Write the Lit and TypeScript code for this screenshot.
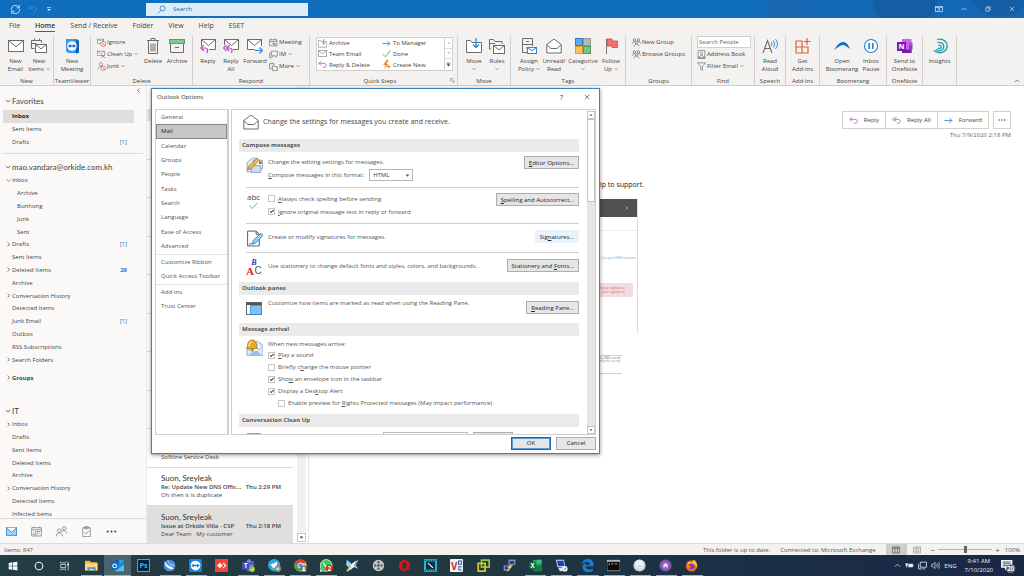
import { LitElement, html, svg, css, nothing, TemplateResult } from "lit";
import { customElement, property } from "lit/decorators.js";
import { classMap } from "lit/directives/class-map.js";
import { styleMap } from "lit/directives/style-map.js";

/* ---------- icons, all drawn on a 16 x 16 grid ---------- */
const G = "#6e6c6a";
const P = "#b14fc5";
const B = "#2b88d8";
const env = (x: number, y: number, w: number, h: number, c = G, f = "#fff") =>
  svg`<rect x=${x} y=${y} width=${w} height=${h} fill=${f} stroke=${c} stroke-width="1"/><path d=${`M${x} ${y}l${w / 2} ${h * 0.55}l${w / 2} ${-h * 0.55}`} fill="none" stroke=${c} stroke-width="1"/>`;

const icons: Record<string, TemplateResult | unknown> = {
  sync: svg`<path d="M2 9V6.500a6 6 0 0 1 11-1.500M14 7v2.500a6 6 0 0 1-11 1.500M13.500 1.500v4h-4M2.500 14.500v-4h4" fill="none" stroke="#d5e8f8" stroke-width="1.300"/>`,
  undo: svg`<path d="M3 2v5h5M3 7c3-4 10-4 10 1 0 3-3 5-5 7" fill="none" stroke="#4c93d2" stroke-width="1.300"/>`,
  qat: svg`<path d="M4 5h8" stroke="#d5e8f8" stroke-width="1.400"/><path d="M4 8h8l-4 4z" fill="#d5e8f8"/>`,
  search: svg`<circle cx="10" cy="6" r="4.500" fill="none" stroke="#1b6fb8" stroke-width="1.300"/><path d="M7 9.500L1.500 15" stroke="#1b6fb8" stroke-width="1.300"/>`,
  ribbonOpt: svg`<rect x="1" y="3" width="14" height="10" fill="none" stroke="#e3effa" stroke-width="1.300"/><path d="M1 5h14M8 12V7M5.500 9L8 6.700 10.500 9" fill="none" stroke="#e3effa" stroke-width="1.300"/>`,
  min: svg`<path d="M1 8h14" stroke="#e3effa" stroke-width="1.500"/>`,
  restore: svg`<path d="M2 5h9v9H2zM5 5V2h9v9h-3" fill="none" stroke="#e3effa" stroke-width="1.600"/>`,
  close: svg`<path d="M2 2l12 12M14 2L2 14" stroke="currentColor" stroke-width="1.600"/>`,
  mail: svg`${env(0.5, 2.5, 15, 11)}`,
  newItems: svg`<path d="M.500 2.500h10v2M.500 2.500v8h3M.500 5.500h5M3.500 .500v2M8.500 .500v2" fill="none" stroke=${G}/>${env(4.5, 6.5, 11, 8)}`,
  teamviewer: svg`<path d="M2 1h9c3 0 4 1 4 4v10H6c-3 0-4-1-4-4z" fill="#2f9cf0"/><path d="M12 1l3 2v11l-3 2z" fill="#0f62b8"/><circle cx="8" cy="8" r="4.800" fill="#fff"/><path d="M3.800 8l2.600-2v1.300h3.200V6l2.600 2-2.600 2V8.700H6.400V10z" fill="#1277d4"/>`,
  ignore: svg`<rect x="1" y="2" width="11" height="8" fill="#fff" stroke=${G}/><path d="M1 4h11" stroke=${G}/><circle cx="11" cy="10.500" r="4.500" fill="#fff" stroke="#e5544c" stroke-width="1.400"/><path d="M8 7.500l6 6" stroke="#e5544c" stroke-width="1.400"/>`,
  cleanup: svg`<rect x="1" y="2" width="12" height="8" fill="#fff" stroke=${G}/><path d="M1 2l6 5 6-5" fill="none" stroke=${G}/><path d="M8 8l6 6M14 8l-6 6" stroke="#e5544c" stroke-width="1.600"/>`,
  junk: svg`<circle cx="7" cy="4" r="3" fill="none" stroke=${G}/><path d="M2 14c0-4 2-6 5-6" fill="none" stroke=${G}/><circle cx="11" cy="11" r="4" fill="#fff" stroke="#e5544c" stroke-width="1.400"/><path d="M8.200 8.200l5.600 5.600" stroke="#e5544c" stroke-width="1.400"/>`,
  trash: svg`<path d="M3.500 3v12.500h9V3M2 2.500h12M6 2.500V.500h4v2M6 5.500v8M8 5.500v8M10 5.500v8" fill="none" stroke=${G}/>`,
  archive: svg`<rect x=".5" y="1.500" width="15" height="4" fill="#7ecb95" stroke="#4ea568"/><path d="M1.500 6v8.500h13V6M6 9.500h4" fill="none" stroke=${G}/>`,
  reply: svg`<path d="M1.500 8V1.500h14v10H9" fill="#fff" stroke=${G}/><path d="M1.500 1.500l7 6 7-6" fill="none" stroke=${G}/><path d="M4 7L.800 10 4 13M1 10h4.500c2 0 2.500 2 1.500 5" fill="none" stroke=${P} stroke-width="1.200"/>`,
  replyAll: svg`<path d="M1.500 7V1.500h14v10H10" fill="#fff" stroke=${G}/><path d="M1.500 1.500l7 6 7-6" fill="none" stroke=${G}/><path d="M3.500 7L.500 10l3 3M6.500 7l-3 3 3 3M4 10h3c2 0 2.500 2 1.500 5" fill="none" stroke=${P} stroke-width="1.200"/>`,
  forward: svg`<path d="M8 11.500H.500v-10h14V8" fill="#fff" stroke=${G}/><path d="M.500 1.500l7 6 7-6" fill="none" stroke=${G}/><path d="M8 12.500h7.500M12.500 9.500l3 3-3 3" fill="none" stroke=${B} stroke-width="1.200"/>`,
  meeting: svg`<path d="M1 3h13v11H1zM1 6h13M4 1v2M11 1v2" fill="none" stroke=${G} stroke-width="1.200"/><path d="M9 8l-2.500 2L9 12M7 10h4v4" fill="none" stroke=${P} stroke-width="1.500"/>`,
  im: svg`<path d="M4 2h11v8h-2v3l-3-3H4zM4 6H1v6h1v3l2.500-3H8" fill="none" stroke=${G} stroke-width="1.200"/>`,
  more: svg`<path d="M1 3h8v3M1 3v9h4M3 1v2M7 1v2M6 7h4l1 1.500h4V15H6z" fill="none" stroke=${G} stroke-width="1.200"/>`,
  folderDown: svg`<path d="M.500 2.500h4L6 4.500h9.500V14.500H.500z" fill="#fff" stroke=${G}/><path d="M10 0v9M7 6.500l3 3 3-3" fill="none" stroke=${B} stroke-width="1.300"/>`,
  right: svg`<path d="M1 8h13M9.500 3.500L14 8l-4.500 4.500" fill="none" stroke=${B} stroke-width="1.500"/>`,
  done: svg`<path d="M1.500 9l4.500 5L15 2.500" fill="none" stroke="#4aae6b" stroke-width="1.600"/>`,
  flash: svg`<path d="M8 0L2 9h4l-2 7 8-9H8l4-7z" fill="#f0912d"/><path d="M12 9v6M9 12h6" stroke="#c96b10" stroke-width="1.300"/>`,
  back: svg`<path d="M5.500 2L1.500 6l4 4M2 6h9c5 0 5 7 0 7H9" fill="none" stroke=${P} stroke-width="1.400"/>`,
  backAll: svg`<path d="M4.500 2L.800 6l3.700 4M8 2L4.300 6 8 10M5 6h6c5 0 5 7 0 7H9" fill="none" stroke=${P} stroke-width="1.400"/>`,
  rules: svg`<path d="M.500 11V1.500h4L6 3.500h7V6M2 11H.500M.500 5.500H6" fill="none" stroke=${G}/>${env(4.5, 7.5, 11, 8)}`,
  policy: svg`<path d="M6 14.500H1.500v-14h10V8M1.500 6.500h10M5 3.500h3M5 10h2" fill="none" stroke=${G}/>${env(6.5, 9.5, 9, 6, B)}`,
  openMail: svg`<path d="M.800 6.500L8 1l7.200 5.500v8.500H.800z" fill="#fff" stroke=${G}/><path d="M.800 6.500l4.200 4h6l4.200-4" fill="none" stroke=${G}/>`,
  categorize: svg`<rect x=".5" y=".5" width="7" height="7" fill="#63a8e4" stroke="#2b7cc4"/><rect x="8.500" y=".5" width="7" height="7" fill="#b9b7b5" stroke="#979593"/><rect x=".5" y="8.500" width="7" height="7" fill="#fbc45e" stroke="#e79a1f"/><rect x="8.500" y="8.500" width="7" height="7" fill="#74c68c" stroke="#45a162"/>`,
  flag: svg`<path d="M3.500 1v15" stroke="#777" /><path d="M4 1h5v2h5.500v6.500H9V8H4z" fill="#f4716f" stroke="#d9423f" stroke-width=".8"/>`,
  people: svg`<circle cx="4.500" cy="3.500" r="2.300" fill="none" stroke=${G} stroke-width="1.300"/><circle cx="11.500" cy="3.500" r="2.300" fill="none" stroke=${G} stroke-width="1.300"/><circle cx="8" cy="8.500" r="2.300" fill="none" stroke=${G} stroke-width="1.300"/><path d="M1 10c0-3 2-4 4-3.500M15 10c0-3-2-4-4-3.500M4 15c0-6 8-6 8 0" fill="none" stroke=${G} stroke-width="1.300"/>`,
  book: svg`<path d="M2 1h12v14H2z" fill="#fff" stroke=${G} stroke-width="1.300"/><circle cx="8" cy="6" r="2.200" fill="none" stroke=${G} stroke-width="1.300"/><path d="M4.500 13c0-5 7-5 7 0M1 13h14" fill="none" stroke=${G} stroke-width="1.300"/>`,
  funnel: svg`<path d="M1 1.500h14L9.500 8v7l-3-2V8z" fill="none" stroke=${G} stroke-width="1.200"/>`,
  aloud: svg`<path d="M1 15L5.500 2.500 10 15M2.500 10.500h6" fill="none" stroke=${G} stroke-width="1.100"/><path d="M9.500 4a4 4 0 0 1 0 4M11.500 2.500a6 6 0 0 1 0 7M13.500 1a8 8 0 0 1 0 10" fill="none" stroke="#3a93cf" stroke-width="1"/>`,
  addins: svg`<path d="M1 3h6v12H1zM1 9h12v6H1M7 3v6M13 9v6M12 0v7M8.500 3.500h7" fill="none" stroke="#e0603a" stroke-width="1.200"/>`,
  boomerang: svg`<path d="M0 12C3 7 6 4 9 4s5 2 7 7c-3-2-5-4-7-4S4 9 0 12z" fill="#0c72c9"/>`,
  pause: svg`<circle cx="8" cy="8" r="6.500" fill="#fff" stroke="#1f86d6" stroke-width="1.100"/><path d="M6.200 5v6M9.800 5v6" stroke="#1f86d6" stroke-width="1.700"/>`,
  onenote: svg`<path d="M5 1h9.500v14H5z" fill="#ca64ea"/><path d="M12 4.500h3.500V8H12z" fill="#ae4bd5"/><path d="M12 8h3.500v3.500H12z" fill="#9332bf"/><path d="M5 11.500h9.500V15H5z" fill="#7719aa"/><rect x="0" y="4" width="9" height="9" fill="#7719aa"/><text x="4.500" y="11.200" class="mark" font-size="7.500">N</text>`,
  insights: svg`<path d="M5 1.500C12-.5 16 5 15 9.500S7 17 2 12.500M5.500 4.500C10 3.500 12.500 7 11.500 10S7 13.500 4 11.500M6.500 7.300c2-.3 3 1 2.500 2.200S7 11 6 10" fill="none" stroke="#1f9aa8" stroke-width="1.300"/>`,
  calendar: svg`<path d="M1 2.500h14v12H1zM1 5.500h14M4 1v1.500M12 1v1.500" fill="none" stroke=${G}/><path d="M6 8h7M3.500 10.300h9M3.500 12.500h6" stroke=${G} stroke-dasharray="1.500 1.200" stroke-width="1.400"/>`,
  mailOn: svg`<rect x=".5" y="2.500" width="15" height="11" fill="#9fd0f5" stroke="#1272c4"/><path d="M.500 2.500L8 9l7.500-6.500" fill="#fff" stroke="#1272c4"/>`,
  contacts: svg`<circle cx="5" cy="7" r="2.700" fill="none" stroke=${G}/><circle cx="12" cy="3.500" r="2.500" fill="none" stroke=${G}/><path d="M.500 15c0-7 9-7 9 0M9 8c2-2 6-1.500 6.500 3" fill="none" stroke=${G}/>`,
  tasks: svg`<path d="M2.500 2.500h11v13h-11zM5.500 1h5v3h-5z" fill="none" stroke=${G}/><path d="M5 9l2.500 2.500L11.500 7" fill="none" stroke=${G}/>`,
  dots: svg`<circle cx="2.500" cy="8" r="1.500" fill="#444"/><circle cx="8" cy="8" r="1.500" fill="#444"/><circle cx="13.500" cy="8" r="1.500" fill="#444"/>`,
  compose: svg`<path d="M1 6l5-4h4v9l-4 4H1z" fill="#dfe8f2" stroke="#8795a8" stroke-width=".7"/><path d="M7 4h8.500v8H7z" fill="#f6f9fc" stroke="#7c8da5" stroke-width=".7"/><path d="M5 9h9v6.500H5z" fill="#cddced" stroke="#7c8da5" stroke-width=".7"/><path d="M12.300 5h2.500v2.500h-2.500z" fill="#de4a34"/><path d="M1.500 13l1-3L10.500 2 12.500 4 4.500 12z" fill="#f3bd4e" stroke="#8a6420" stroke-width=".7"/>`,
  signature: svg`<path d="M1.500 1h8l3 3v11h-11z" fill="#fff" stroke="#555" stroke-width=".9"/><path d="M9.500 1v3h3" fill="none" stroke="#555" stroke-width=".9"/><path d="M6 13l1-3.500L14 3l2 2-6.500 7z" fill="#9bd0f2" stroke="#2b88d8" stroke-width=".9"/><path d="M3 14c2-3 3 0 4-1" fill="none" stroke="#2b88d8"/>`,
  panes: svg`<rect x=".5" y="1.500" width="15" height="12" fill="#fff" stroke="#555" stroke-width=".9"/><path d="M1 3h14" stroke="#555" stroke-width="2"/><path d="M4.500 4.500h11v9h-11z" fill="#83bff0" stroke="#2b88d8" stroke-width=".8"/>`,
  bell: svg`<path d="M5 6l5.500-4L16 6v10H1V9z" fill="#dce9f6" stroke="#7f9bbb" stroke-width=".7"/><path d="M1 9l8 4 7-7" fill="#fff" stroke="#7f9bbb" stroke-width=".7"/><path d="M1 16l7-5h2l6 5z" fill="#9cc0e4"/><path d="M.500 9C2 7.500 1 5.500 2 3.500 3 .500 7.500 0 9 2.500 10.500 5 9.500 7 11 9z" fill="#e8ab2c" stroke="#9a6a10" stroke-width=".7"/><path d="M3 7c0-2 .500-4 2.500-4.500" stroke="#fbe39b" stroke-width="1.300" fill="none"/><circle cx="6" cy="10" r="1.300" fill="#b8801a"/>`,
  abcCheck: svg`<path d="M1 8l5 5.500L15 3" fill="none" stroke="#4aae6b" stroke-width="1.500"/>`,
  win: svg`<path d="M1 3l6-1v5.500H1zM8 1.900L15 1v6.500H8zM1 8.500h6V14l-6-1zM8 8.500h7V15l-7-1z" fill="#f4f7f8"/>`,
  cortana: svg`<circle cx="8" cy="8" r="6" fill="none" stroke="#eef3f4" stroke-width="1.800"/>`,
  taskview: svg`<path d="M1 1v2h8V1M1 15v-2h8v2M1 5.500h8v5H1zM13 1v14" fill="none" stroke="#dfe6e8" stroke-width="1.200"/><path d="M11.500 4h3v3h-3z" fill="#dfe6e8"/>`,
  explorer: svg`<path d="M0 2h6l1.500 2H15v10H0z" fill="#f0b73d"/><path d="M0 5.500h15.500V14H0z" fill="#fcd876"/><path d="M3 10h10v4.500h-2.500V12h-5v2.500H3z" fill="#3c93dd"/>`,
  outlook: svg`<path d="M5 1h10v8H5z" fill="#28a8ea"/><path d="M5 1h5v4H5z" fill="#0f5fae"/><path d="M10 5h6v9H5V8z" fill="#1489dc"/><path d="M5 14l11-7v8H6z" fill="#50c0f5"/><rect x="0" y="4" width="9" height="9" rx="1" fill="#0a64b8"/><circle cx="4.500" cy="8.500" r="2.300" fill="none" stroke="#fff" stroke-width="1.300"/>`,
  ps: svg`<rect x=".7" y=".7" width="14.600" height="14.600" fill="#051c2c" stroke="#26b7f2" stroke-width="1.300"/><text x="8" y="11.500" class="mark cyan" font-size="9">Ps</text>`,
  bird: svg`<circle cx="8" cy="8" r="7.200" fill="#4a8fe0"/><path d="M2 2.500c0 6 4 11 12 10-1.500-1-2.500-1.500-3-3C7 9.500 4 6.500 2 2.500z" fill="#f2f8fe"/><path d="M6 2c1 4 3 5 8 6" fill="none" stroke="#b9d8f7" stroke-width="1.200"/>`,
  tv: svg`<rect width="16" height="16" rx="2" fill="#1183e3"/><circle cx="8" cy="8" r="6" fill="#fff"/><path d="M2.600 8l3.400-2.600v1.700h4V5.400L13.400 8 10 10.600V8.900H6v1.700z" fill="#1183e3"/>`,
  anydesk: svg`<rect width="16" height="16" fill="#f0443a"/><path d="M6 4.500L9.500 8 6 11.500 2.500 8zM9 4.500L10.500 4.500 14 8l-3.500 3.500H9L12 8z" fill="#fff"/>`,
  teams: svg`<circle cx="13" cy="4" r="2" fill="#5b62c9"/><circle cx="8.500" cy="3" r="2.700" fill="#7b83eb"/><path d="M5 6h9.500v5c0 3-3 4-5 4s-4.500-1-4.500-4z" fill="#6b74dc"/><rect x="0" y="4" width="9" height="9" rx="1" fill="#454db3"/><text x="4.500" y="11.200" class="mark" font-size="7.500">T</text><circle cx="12.500" cy="12.500" r="3.500" fill="#8fc43a"/><path d="M11 12.500l1.200 1.200 2-2.200" fill="none" stroke="#fff"/>`,
  telegram: svg`<circle cx="7.500" cy="7.500" r="7.500" fill="#32a5dc"/><path d="M2.500 7.500l9-4-1.500 9-3-2-1.500 1.500V9z" fill="#fff"/><circle cx="12" cy="12" r="4" fill="#8a9093"/><path d="M11 10.500v3M13 10.500v3" stroke="#fff"/>`,
  chrome: svg`<circle cx="8" cy="8" r="7.500" fill="#f3c52f"/><path d="M1.500 4.200A7.500 7.500 0 0 1 14.800 5H8a3 3 0 0 0-2.800 4z" fill="#e2402f"/><path d="M1.500 4.200A7.500 7.500 0 0 0 7.500 15.500L10 10.500A3 3 0 0 1 5.300 9.500z" fill="#35a653"/><circle cx="8" cy="8" r="3" fill="#4a8df0" stroke="#fff"/><circle cx="12" cy="12" r="4" fill="#6e6e6e"/><circle cx="12" cy="11" r="1.500" fill="#eee"/><path d="M9.500 15c0-3.500 5-3.500 5 0z" fill="#eee"/>`,
  whatsapp: svg`<path d="M0 15.500l1.200-4A7.300 7.300 0 1 1 4.300 14.500z" fill="#3cc85a" stroke="#eafaee"/><path d="M4.500 4.500c1 4 3 6 6.500 6.500" stroke="#fff" stroke-width="1.700" fill="none"/><circle cx="11.500" cy="11.500" r="4.500" fill="#e2231a"/><text x="11.500" y="14.500" class="mark" font-size="8">2</text>`,
  butterfly: svg`<path d="M1 1l6 5 8-5-3 7 3 4-5-2-4 3-5 3 2-6-3-3z" fill="#8fd0f2"/><path d="M7 6l5-4-1 5-3 4-5 3 3-6z" fill="#f4f9fc"/><path d="M3 2l3 3M13 4l-3 4" stroke="#2c83c4"/><path d="M1 15l5-6" stroke="#d9b45a" stroke-width="1.800"/>`,
  reel: svg`<circle cx="8" cy="8" r="7" fill="#c2c7c9"/><circle cx="8" cy="8" r="1.500" fill="#4c5558"/><g fill="#5d676a"><circle cx="8" cy="4" r="1.500"/><circle cx="8" cy="12" r="1.500"/><circle cx="4" cy="8" r="1.500"/><circle cx="12" cy="8" r="1.500"/></g>`,
  red: svg`<path d="M8 .5l6.500 3.500v8L8 15.500 1.500 12V4z" fill="#d8141c"/><ellipse cx="8" cy="8" rx="2.600" ry="4" fill="#243a45"/>`,
  film: svg`<rect width="16" height="16" fill="#25b6cc"/><rect x="2.500" y="3" width="11" height="10" fill="#0e2d3f"/><path d="M1 1.500h14M1 14.500h14" stroke="#0e2d3f" stroke-width="1.400" stroke-dasharray="1.500 1.500"/><path d="M5 5l6 6" stroke="#e8f6f8" stroke-width="1.500"/>`,
  vnc: svg`<rect width="16" height="16" rx="1" fill="#f2f2f2"/><text x="5" y="13" class="mark crimson" font-size="12">V</text><path d="M10.500 2.500h3.500v4h-3.500zM14.500 9.500h-3.500v4h3.500" fill="none" stroke="#2c57b5" stroke-width="1.300"/>`,
  vm: svg`<path d="M5.500 1.500H15V10H5.500z" fill="none" stroke="#8cc63f" stroke-width="2.200"/><path d="M1.500 5.500H10V15H1.500z" fill="none" stroke="#e0c12c" stroke-width="2.200"/>`,
  putty: svg`<path d="M7 1h8v6H7zM1 8h7v6H1z" fill="#b8c4d0" stroke="#5a6670" stroke-width=".6"/><path d="M8 2h6v4H8zM2 9h5v4H2z" fill="#2739b8"/><path d="M12 7l-6 3 4 0-5 5" fill="none" stroke="#f7e23c" stroke-width="1.300"/>`,
  excel: svg`<path d="M5 1h10.500v14H5z" fill="#21a366"/><path d="M10 1h5.500v4.500H10z" fill="#33c481"/><path d="M5 8h10.500v7H5z" fill="#107c41"/><rect x="0" y="4" width="8.500" height="8.500" fill="#0f6b38"/><text x="4.200" y="11" class="mark" font-size="7.500">X</text>`,
  rdp: svg`<path d="M1 1h10l2 9H3z" fill="#c9d6e3"/><path d="M2.500 2h7.800l1.500 6.500H3.800z" fill="#1743c8"/><path d="M4 11l9-1 2 4-9 1z" fill="#dfe5ea"/><circle cx="12" cy="12" r="3.500" fill="#e9eef0"/><path d="M10.500 12l1.200 1.200 2-2.400" fill="none" stroke="#3a8a3a"/>`,
  edge: svg`<path d="M.500 7.500C1.500 2 5 0 8.500 0c5 0 7 3.500 7 7v2H5.500c.2 4.500 6 4.500 9 2.600V15c-6 2.500-12.500.5-12.500-5C2 7 4 5 6 4.500c-.7.800-1 1.700-1 2.500h6c0-5-7-4.500-10.500.500z" fill="#0f7fdc"/>`,
  cmd: svg`<rect width="16" height="13" y="1.500" fill="#0a0a0a" stroke="#b9b9b9" stroke-width=".8"/><path d="M0 2.500h16" stroke="#d8d8d8" stroke-width="1.600"/><path d="M2 5.500l1.500 1L2 7.500M5 6h3M9.500 6h3" fill="none" stroke="#ddd" stroke-width=".9"/>`,
  ball: svg`<circle cx="8" cy="8" r="7.500" fill="#d2d2d2"/><circle cx="8" cy="6.500" r="5.500" fill="#efefef"/><path d="M6 9h4" stroke="#aaa"/>`,
  purple: svg`<circle cx="8" cy="8" r="7.500" fill="#8450ad"/><circle cx="8" cy="8" r="4.500" fill="#9a6bbd"/><path d="M5.500 10.500V7.500L8 5l2.500 2.500v3H9V8.800H7v1.700z" fill="#f3eaf8"/>`,
  firefox: svg`<circle cx="8" cy="8.500" r="7" fill="#f5662a"/><path d="M3 3c1 1 3 0 5 1.500L11 .500c3 3 5 6 3.500 10-1-3-3-4-5-4S4 8 3 3z" fill="#fcc32c"/><circle cx="8" cy="9" r="3.400" fill="#6b3bc6"/><path d="M1 8c3-1 4 1 7 .5-1 3-5 2.500-7-.5z" fill="#f9862b"/>`,
  up: svg`<path d="M2 11l6-6 6 6" fill="none" stroke="#e8edf3" stroke-width="1.600"/>`,
  battery: svg`<path d="M1 4h4v4H4v3H2V8H1zM6 5h8v6H6z" fill="#e8edf3"/><path d="M14 7h1.500v2H14z" fill="#e8edf3"/>`,
  network: svg`<path d="M4 2h11v9H4zM1 5v9h6M8 14h5" fill="none" stroke="#e8edf3" stroke-width="1.400"/>`,
  sound: svg`<path d="M1 6h2.500L7 2.500v11L3.500 10H1z" fill="none" stroke="#e8edf3" stroke-width="1.200"/><path d="M9.500 5.500a4 4 0 0 1 0 5M11.500 3.500a6.500 6.500 0 0 1 0 9M13.500 2a9 9 0 0 1 0 12" fill="none" stroke="#e8edf3"/>`,
  notes: svg`<path d="M0 1h13v9H7l-2.500 3v-3H0z" fill="#eef2f6"/><path d="M2 3.500h9M2 5.500h9M2 7.500h6" stroke="#33415c" stroke-width=".9"/><circle cx="11" cy="11" r="4.800" fill="#4d5668" stroke="#aeb6c2" stroke-width=".7"/><text x="11" y="13.500" class="mark" font-size="7">20</text>`,
  viewA: svg`<path d="M1 2h14v12H1zM6 2v12M11 2v12M1 4.500h14" fill="none" stroke="#555" stroke-width="1.300"/>`,
  viewB: svg`<path d="M1 2h14v12H1zM8 2v12" fill="none" stroke="#888" stroke-width="1.200"/><path d="M3 5h4M3 8h4M3 11h4M9 5h4M9 8h4M9 11h4" stroke="#888"/>`,
  chevD: svg`<path d="M2 5l6 6 6-6" fill="none" stroke="currentColor" stroke-width="2"/>`,
  chevR: svg`<path d="M5 2l6 6-6 6" fill="none" stroke="currentColor" stroke-width="2.400"/>`,
  chevL: svg`<path d="M11 2L5 8l6 6" fill="none" stroke="currentColor" stroke-width="2.400"/>`,
  chevU: svg`<path d="M2 11l6-6 6 6" fill="none" stroke="currentColor" stroke-width="2"/>`,
  triD: svg`<path d="M2 5h12l-6 7z" fill="currentColor"/>`,
  triU: svg`<path d="M2 11h12L8 4z" fill="currentColor"/>`,
  triBar: svg`<path d="M2 3.500h12" stroke="currentColor" stroke-width="2.400"/><path d="M2 7.500h12l-6 6.500z" fill="currentColor"/>`,
  launch: svg`<path d="M2 12V2h10M6 6l7 7M13 8v5.500H8" fill="none" stroke="#666" stroke-width="1.600"/>`,
};

const ic = (name: string, size = 8) =>
  html`<svg width=${size} height=${size} viewBox="0 0 16 16" aria-hidden="true">${icons[name]}</svg>`;

const base = css`
  :host { box-sizing: border-box; }
  *, *::before, *::after { box-sizing: border-box; }
  button, input, select { font: inherit; color: inherit; margin: 0; padding: 0; border: 0; background: none; border-radius: 0; }
  a { color: inherit; text-decoration: none; }
  svg { display: block; flex: none; }
  .mark { font-family: "Open Sans", sans-serif; font-weight: 700; text-anchor: middle; fill: #fff; }
  .mark.cyan { fill: #35bdf5; }
  .mark.crimson { fill: #d7262e; }
  u { text-underline-offset: 1px; text-decoration-thickness: 1px; }
`;

/* ---------- ribbon ---------- */
interface Big { icon: string; lines: string[]; w: number; drop?: boolean }
interface Group { label: string; w: number; pad?: number; big?: Big[]; small?: [string, string, boolean?][]; smallFirst?: boolean; custom?: string }

const groups: Group[] = [
  { label: "New", w: 54, pad: 3, big: [{ icon: "mail", lines: ["New", "Email"], w: 25 }, { icon: "newItems", lines: ["New", "Items"], w: 22, drop: true }] },
  { label: "TeamViewer", w: 37, big: [{ icon: "teamviewer", lines: ["New", "Meeting"], w: 36 }] },
  { label: "Delete", w: 102, pad: 6, smallFirst: true, small: [["ignore", "Ignore"], ["cleanup", "Clean Up", true], ["junk", "Junk", true]], big: [{ icon: "trash", lines: ["Delete"], w: 24 }, { icon: "archive", lines: ["Archive"], w: 24 }] },
  { label: "Respond", w: 117, pad: 3, small: [["meeting", "Meeting"], ["im", "IM", true], ["more", "More", true]], big: [{ icon: "reply", lines: ["Reply"], w: 24 }, { icon: "replyAll", lines: ["Reply", "All"], w: 22 }, { icon: "forward", lines: ["Forward"], w: 26 }] },
  { label: "Quick Steps", w: 148, pad: 6, custom: "steps" },
  { label: "Move", w: 53, pad: 4, big: [{ icon: "folderDown", lines: ["Move", ""], w: 24, drop: true }, { icon: "rules", lines: ["Rules", ""], w: 22, drop: true }] },
  { label: "Tags", w: 115, pad: 5, big: [{ icon: "policy", lines: ["Assign", "Policy"], w: 26, drop: true }, { icon: "openMail", lines: ["Unread/", "Read"], w: 24 }, { icon: "categorize", lines: ["Categorize", ""], w: 34, drop: true }, { icon: "flag", lines: ["Follow", "Up"], w: 22, drop: true }] },
  { label: "Groups", w: 66, pad: 6, small: [["people", "New Group"], ["people", "Browse Groups"]] },
  { label: "Find", w: 63, pad: 5, custom: "find" },
  { label: "Speech", w: 31, big: [{ icon: "aloud", lines: ["Read", "Aloud"], w: 30 }] },
  { label: "Add-ins", w: 34, big: [{ icon: "addins", lines: ["Get", "Add-ins"], w: 32 }] },
  { label: "Boomerang", w: 67, pad: 4, big: [{ icon: "boomerang", lines: ["Open", "Boomerang"], w: 36 }, { icon: "pause", lines: ["Inbox", "Pause"], w: 22 }] },
  { label: "OneNote", w: 36, big: [{ icon: "onenote", lines: ["Send to", "OneNote"], w: 34 }] },
  { label: "", w: 34, big: [{ icon: "insights", lines: ["Insights"], w: 32 }] },
];

const steps: [string, string][] = [
  ["folderDown", "Archive"], ["right", "To Manager"],
  ["mail", "Team Email"], ["done", "Done"],
  ["back", "Reply & Delete"], ["flash", "Create New"],
];

@customElement("ol-ribbon")
class OlRibbon extends LitElement {
  static styles = [base, css`
    :host { display: block; background: #f3f2f1; color: #444; border-bottom: 1px solid #d0cecc; }
    .tabs { display: flex; height: 17px; padding-left: 9px; gap: 15px; font-size: 7px; line-height: 13px; }
    .tab { height: 14px; padding-top: 1px; }
    .tab.on { font-weight: 600; border-bottom: 1px solid #106ebe; color: #333; }
    .groups { display: flex; height: 50px; position: relative; }
    .group { display: flex; flex-direction: column; flex: none; border-right: 1px solid #d2d0ce; margin-top: 1px; }
    .body { display: flex; flex: 1; align-items: flex-start; }
    .body.center { justify-content: center; }
    .label { display: flex; justify-content: center; line-height: 8px; height: 8px; white-space: nowrap; }
    .label span { flex: 1; text-align: center; }
    .label svg { margin: 1px 2px 0 0; }
    .big { display: flex; flex-direction: column; align-items: center; line-height: 8px; padding-top: 2px; white-space: nowrap; }
    .big svg { margin-bottom: 3px; }
    .big .drop, .small .drop { display: inline-flex; align-items: center; gap: 2px; }
    .big .drop { height: 8px; }
    .big .drop svg { margin: 0; }
    .col { display: flex; flex-direction: column; }
    .col.first { width: 44px; }
    .col.last { padding-left: 1px; }
    .small { display: flex; align-items: center; gap: 1px; height: 12px; line-height: 12px; white-space: nowrap; text-align: left; }
    .steps { display: flex; margin-top: 1px; width: 137px; height: 34px; border: 1px solid #d2d0ce; background: #fff; }
    .grid { flex: 1; display: grid; grid-template-columns: 64px 1fr; grid-auto-rows: 1fr; padding-left: 1px; }
    .step { display: flex; align-items: center; gap: 2px; white-space: nowrap; }
    .spin { display: grid; grid-auto-rows: 1fr; width: 8px; border-left: 1px solid #d2d0ce; color: #b5b3b1; }
    .spin button { display: grid; place-items: center; border-bottom: 1px solid #dddbd9; }
    .spin button:last-child { color: #444; border-bottom: 0; }
    .people { width: 54px; height: 12px; border: 1px solid #d2d0ce; background: #fff; padding-left: 1px; }
    .people::placeholder { color: #666; opacity: 1; }
    .fold { margin: auto 4px 0 auto; padding-bottom: 1px; color: #555; }
  `];

  private bigBtn = (b: Big) => html`
    <button class="big" style=${styleMap({ width: `${b.w}px` })}>
      ${ic(b.icon, 16)}
      ${b.lines.map((l, i) => b.drop && i === b.lines.length - 1
        ? html`<span class="drop">${l}${ic("chevD", 4)}</span>`
        : html`<span>${l}</span>`)}
    </button>`;

  private smallBtn = (s: [string, string, boolean?]) => html`
    <button class="small">${ic(s[0], 9)}<span class="drop">${s[1]}${s[2] ? ic("chevD", 4) : nothing}</span></button>`;

  private body(g: Group) {
    if (g.custom === "steps") {
      return html`<div class="steps">
        <div class="grid">${steps.map(([i, t]) => html`<button class="step">${ic(i, 9)}${t}</button>`)}</div>
        <div class="spin"><button aria-label="Up">${ic("triU", 4)}</button><button aria-label="Down">${ic("triD", 4)}</button><button aria-label="More steps">${ic("triBar", 5)}</button></div>
      </div>`;
    }
    if (g.custom === "find") {
      return html`<div class="col">
        <input class="people" type="text" placeholder="Search People" aria-label="Search People">
        ${this.smallBtn(["book", "Address Book"])}${this.smallBtn(["funnel", "Filter Email", true])}
      </div>`;
    }
    const small = g.small ? html`<div class=${classMap({ col: true, first: !!g.smallFirst, last: !g.smallFirst && !!g.big })}>${g.small.map(this.smallBtn)}</div>` : nothing;
    return html`${g.smallFirst ? small : nothing}${(g.big ?? []).map(this.bigBtn)}${g.smallFirst ? nothing : small}`;
  }

  render() {
    return html`
      <nav class="tabs">
        ${["File", "Home", "Send / Receive", "Folder", "View", "Help", "ESET"].map((t) => html`<a href="#" class=${classMap({ tab: true, on: t === "Home" })}>${t}</a>`)}
      </nav>
      <div class="groups">
        ${groups.map((g) => html`
          <section class="group" style=${styleMap({ width: `${g.w}px` })}>
            <div class=${classMap({ body: true, center: !g.pad })} style=${styleMap({ paddingLeft: `${g.pad ?? 0}px` })}>${this.body(g)}</div>
            <div class="label"><span>${g.label}</span>${g.custom === "steps" ? ic("launch", 5) : nothing}</div>
          </section>`)}
        <button class="fold" aria-label="Collapse ribbon">${ic("chevU", 6)}</button>
      </div>`;
  }
}

/* ---------- folder pane ---------- */
interface Folder { name: string; count?: string; arrow?: string; level?: number; on?: boolean; bold?: boolean }
const favorites: Folder[] = [{ name: "Inbox", on: true, bold: true }, { name: "Sent Items" }, { name: "Drafts", count: "[1]" }];
const account: Folder[] = [
  { name: "Inbox", arrow: "chevD" }, { name: "Archive", level: 1 }, { name: "Bunhong", level: 1 }, { name: "Junk", level: 1 }, { name: "Sent", level: 1 },
  { name: "Drafts", arrow: "chevR", count: "[1]" }, { name: "Sent Items" }, { name: "Deleted Items", arrow: "chevR", count: "26" }, { name: "Archive" },
  { name: "Conversation History", arrow: "chevR" }, { name: "Detected Items" }, { name: "Junk Email", count: "[1]" }, { name: "Outbox" },
  { name: "RSS Subscriptions" }, { name: "Search Folders", arrow: "chevR" },
];
const it: Folder[] = [
  { name: "Inbox", arrow: "chevR" }, { name: "Drafts" }, { name: "Sent Items" }, { name: "Deleted Items" }, { name: "Archive" },
  { name: "Conversation History", arrow: "chevR" }, { name: "Detected Items" }, { name: "Infected Items" },
];

@customElement("ol-folders")
class OlFolders extends LitElement {
  static styles = [base, css`
    :host { display: flex; flex-direction: column; background: #faf9f8; color: #444; min-height: 0; }
    .scroll { flex: 1; min-height: 0; overflow: hidden; }
    .top { display: flex; justify-content: flex-end; align-items: center; height: 8px; padding-right: 5px; }
    .head { display: flex; align-items: center; gap: 1px; height: 14px; padding-left: 5px; font-family: Lato, sans-serif; font-size: 8px; white-space: nowrap; }
    .account { margin-top: 6px; }
    .list { display: grid; grid-auto-rows: 1fr; margin-left: 3px; margin-right: 12px; }
    .fav { height: 38px; margin-top: 2px; }
    .main { height: 192px; }
    .grp { height: 13px; margin-top: 5px; }
    .it { height: 102px; }
    .second { margin-top: 20px; }
    .row { display: flex; align-items: center; padding-right: 7px; white-space: nowrap; }
    .row.on { background: #e1dfdd; color: #222; }
    .row.bold { font-weight: 700; }
    .arrow { width: 9px; display: flex; justify-content: center; padding-left: 2px; }
    .row.sub .name { padding-left: 5px; }
    .name { flex: 1; }
    .count { color: #2f76be; }
    .count.strong { font-weight: 700; }
    .rule { border-top: 1px solid #dddbd9; margin: 5px 3px 0; }
    .bar { display: flex; align-items: center; gap: 14px; height: 25px; padding-left: 6px; border-top: 1px solid #dddbd9; }
  `];
  private row = (f: Folder) => html`
    <a href="#" class=${classMap({ row: true, on: !!f.on, bold: !!f.bold, sub: !!f.level })}>
      <span class="arrow">${f.arrow ? ic(f.arrow, 5) : nothing}</span><span class="name">${f.name}</span>
      ${f.count ? html`<span class=${classMap({ count: true, strong: f.count === "26" })}>${f.count}</span>` : nothing}
    </a>`;
  render() {
    return html`
      <div class="scroll">
        <div class="top">${ic("chevL", 5)}</div>
        <div class="head">${ic("chevD", 6)}Favorites</div>
        <div class="list fav">${favorites.map(this.row)}</div>
        <div class="rule"></div>
        <div class="head account">${ic("chevD", 6)}mao.vandara@orkide.com.kh</div>
        <div class="list main">${account.map(this.row)}</div>
        <div class="list grp">${this.row({ name: "Groups", arrow: "chevR", bold: true })}</div>
        <div class="head second">${ic("chevD", 6)}IT</div>
        <div class="list it">${it.map(this.row)}</div>
      </div>
      <div class="bar">
        ${[["mailOn", "Mail"], ["calendar", "Calendar"], ["contacts", "People"], ["tasks", "Tasks"], ["dots", "More"]].map(([i, l]) => html`<button aria-label=${l}>${ic(i, 11)}</button>`)}
      </div>`;
  }
}

/* ---------- message list ---------- */
@customElement("ol-messages")
class OlMessages extends LitElement {
  static styles = [base, css`
    :host { display: flex; background: #fff; color: #444; border-right: 1px solid #e6e4e2; min-height: 0; border-left: 1px solid #eceae8; }
    .list { flex: 1; display: flex; flex-direction: column; }
    .tools { height: 23px; }
    .group { height: 12px; background: #e8e6e4; }
    .items { display: grid; grid-auto-rows: 1fr; height: 385px; }
    .item { display: flex; flex-direction: column; justify-content: center; padding: 0 12px 0 14px; line-height: 8px; border-bottom: 1px solid #dddbd9; white-space: nowrap; }
    .item.on { flex: 1; background: #e1dfdd; border: 0; }
    .from { font-family: Lato, sans-serif; font-size: 8px; line-height: 10px; color: #333; }
    .subject { display: flex; justify-content: space-between; font-weight: 600; }
    .preview { white-space: pre; }
    .bar { display: flex; flex-direction: column; justify-content: flex-end; width: 9px; margin: 0 2px 1px 4px; background: #f1f0ef; }
    .down { display: grid; place-items: center; height: 9px; border: 1px solid #c8c6c4; background: #fff; }
  `];
  render() {
    return html`
      <div class="list">
        <div class="tools"></div>
        <div class="group"></div>
        <div class="items">
          ${Array.from({ length: 8 }, () => html`<div class="item"></div>`)}
          <div class="item"><span class="from">&nbsp;</span><span>&nbsp;</span><span>Softline Service Desk</span></div>
          <div class="item"><span class="from">Suon, Sreyleak</span><span class="subject"><span>Re: Update New DNS Offic...</span><span>Thu 2:29 PM</span></span><span>Oh then it is duplicate</span></div>
        </div>
        <div class="item on"><span class="from">Suon, Sreyleak</span><span class="subject"><span>Issue at Orkide Villa - CSP</span><span>Thu 2:18 PM</span></span><span class="preview">Dear Team   My customer</span></div>
      </div>
      <div class="bar"><button class="down" aria-label="Scroll down">${ic("triD", 5)}</button></div>`;
  }
}

/* ---------- reading pane ---------- */
@customElement("ol-reading")
class OlReading extends LitElement {
  static styles = [base, css`
    :host { display: block; background: #fff; color: #444; min-width: 0; overflow: hidden; }
    .actions { display: flex; justify-content: flex-end; gap: 4px; padding: 25px 13px 0 0; }
    .set { display: flex; border: 1px solid #d2d0ce; height: 18px; }
    .set button { display: flex; align-items: center; gap: 6px; padding: 0 6px; white-space: nowrap; }
    .set.tight button { padding: 0 4px; }
    .set button + button { border-left: 1px solid #d2d0ce; }
    .date { text-align: right; padding-right: 13px; line-height: 12px; color: #666; }
    .line { width: 335px; margin: 38px 0 0; text-align: right; font-size: 7px; line-height: 12px; color: #222; }
    .shot { width: 329px; height: 134px; margin-top: 8px; border-right: 1px solid #dddbd9; text-align: right; }
    .cap { display: flex; justify-content: flex-end; align-items: center; height: 18px; padding-right: 8px; background: #505050; color: #ddd; }
    .hint { border-top: 1px solid #eee; margin-top: 13px; padding: 22px 1px 0; font-size: 3px; line-height: 10px; color: #6aa6bd; }
    .alert { height: 14px; margin: 20px 4px 0; padding: 3px 8px; background: #f3dcdd; font-size: 3px; line-height: 4px; color: #b76a6c; }
    .table { width: 313px; height: 19px; margin-top: 22px; border: 1px solid #d2d0ce; border-width: 1px 0; text-align: right; padding: 1px 2px 0; font-size: 3px; line-height: 3px; color: #b3474a; }
    .table div + div { color: #4f93ba; }
  `];
  render() {
    return html`
      <div class="actions">
        <div class="set">
          <button>${ic("back", 9)}Reply</button><button>${ic("backAll", 9)}Reply All</button><button>${ic("right", 9)}Forward</button>
        </div>
        <div class="set tight"><button aria-label="More actions">${ic("dots", 8)}</button></div>
      </div>
      <div class="date">Thu 7/9/2020 2:18 PM</div>
      <p class="line">Please help to support.</p>
      <div class="shot">
        <div class="cap">${ic("close", 4)}</div>
        <div class="hint">Use your DNS hostname</div>
        <div class="alert">on your registrar or<br>your registrar or</div>
      </div>
      <div class="table"><div>add the DNS record</div><div>verify the record</div></div>`;
  }
}

/* ---------- options dialog ---------- */
@customElement("ol-options")
class OlOptions extends LitElement {
  @property({ type: String }) page = "Mail";
  static styles = [base, css`
    :host { display: flex; flex-direction: column; background: #fff; color: #555; border: 1px solid #3c82bd; box-shadow: 0 1px 4px rgba(0, 0, 0, 0.45); }
    .title { display: flex; align-items: center; height: 20px; padding: 0 9px 4px 5px; color: #333; }
    .title span { flex: 1; }
    .title button { display: grid; place-items: center; width: 7px; margin-left: 18px; font-size: 7px; }
    .main { flex: 1; display: flex; gap: 2px; padding: 0 3px; min-height: 0; }
    .cats { width: 74px; border: 1px solid #cfcfcf; border-right-width: 2px; display: flex; flex-direction: column; }
    .set { display: grid; grid-auto-rows: 1fr; }
    .ten { height: 143px; }
    .two { height: 29px; margin-top: 1px; }
    .set + .set { border-top: 1px solid #e3e3e3; }
    .cat { display: flex; align-items: center; padding-left: 5px; white-space: nowrap; }
    .cat.on { background: #c6c6c6; border: 1px solid #8a8a8a; color: #222; padding-left: 4px; }
    .view { flex: 1; display: flex; border: 1px solid #cfcfcf; overflow: hidden; min-width: 0; }
    .content { flex: 1; padding: 3px 8px 0 7px; min-width: 0; overflow: hidden; }
    .intro { display: flex; align-items: center; gap: 4px; height: 17px; padding-left: 4px; font-size: 7px; color: #444; }
    .bar { height: 13px; line-height: 12px; padding-left: 3px; background: #ebebeb; font-size: 6px; font-weight: 700; margin: 0; color: #555; }
    .intro + .bar { margin-top: 9px; }
    .row { display: flex; align-items: flex-start; margin-left: 7px; white-space: nowrap; }
    .row + .row { border-top: 1px solid #cfcfcf; }
    .r1 { height: 35px; padding-top: 4px; }
    .r2 { height: 36px; padding-top: 5px; }
    .r3 { height: 29px; padding-top: 6px; }
    .r4 { height: 30px; padding-top: 6px; }
    .r5 { height: 28px; padding-top: 6px; }
    .r6 { height: 78px; padding-top: 3px; }
    .pic { width: 22px; flex: none; }
    .text { flex: 1; display: flex; flex-direction: column; }
    .text > div, .text > label { display: flex; align-items: center; height: 12px; }
    .r3 .text, .r4 .text { padding-top: 1px; }
    .r1 .text > div + div { height: 14px; gap: 5px; }
    .r2 .text { margin-top: -1px; }
    .r2 .text label { height: 13px; }
    .r6 .text > div { height: 10px; }
    .text.up { margin-top: -4px; }
    .text .sub { margin-left: 10px; }
    .btn { height: 13px; padding: 0 4px; border: 1px solid #adadad; background: #e6e6e6; color: #222; white-space: nowrap; line-height: 10px; }
    .btn.hot { background: #eaf3fc; border-color: #eaf3fc; }
    .pick { position: relative; display: inline-flex; align-items: center; }
    select { appearance: none; width: 44px; height: 12px; border: 1px solid #b5b5b5; padding-left: 3px; background: #fff; color: #333; }
    .pick svg { position: absolute; right: 3px; pointer-events: none; }
    input[type="checkbox"] { appearance: none; position: relative; flex: none; width: 7px; height: 7px; margin-right: 3px; border: 1px solid #c6c6c6; background: #fff; }
    input[type="checkbox"]:checked::after { content: ""; position: absolute; left: 1px; top: 1px; width: 4px; height: 2px; border: solid #444; border-width: 0 0 1px 1px; transform: rotate(-45deg); }
    .abc { font-size: 8px; line-height: 8px; padding-left: 1px; color: #444; }
    .abc svg { margin-left: 2px; }
    .glyphs { width: 16px; height: 17px; display: grid; grid-template: "b b" 7px "a c" 10px / 8px 8px; justify-items: center; }
    .glyphs span { font: 700 11px/10px "Liberation Serif", serif; color: #e01b1b; grid-area: a; }
    .glyphs i { font: italic 700 8px/7px "Liberation Serif", serif; color: #2733c4; grid-area: b; }
    .glyphs b { font: 400 10px/10px "Liberation Sans", sans-serif; color: #555; grid-area: c; }
    .cut { display: flex; align-items: flex-start; padding: 5px 66px 0 8px; }
    .cut .a { width: 14px; height: 4px; margin-top: 1px; background: #9b9b9b; }
    .cut input { width: 85px; height: 12px; margin-left: auto; border: 1px solid #bdbdbd; }
    .cut button { width: 40px; height: 12px; margin-left: 5px; border: 1px solid #adadad; background: #e6e6e6; }
    .scroll { width: 8px; margin: 1px 0 0; background: #e6e6e6; display: flex; flex-direction: column; }
    .scroll button { display: grid; place-items: center; height: 8px; border: 1px solid #c4c4c4; background: #fff; }
    .thumb { height: 83px; background: #fff; border: 1px solid #c4c4c4; }
    .scroll .end { margin-top: auto; }
    .foot { display: flex; justify-content: flex-end; gap: 5px; padding: 2px 3px 3px; }
    .foot button { width: 40px; height: 13px; border: 1px solid #adadad; background: #e6e6e6; color: #222; line-height: 11px; }
    .foot .ok { border: 1px solid #0f6cbd; outline: 1px solid #5b9bd5; outline-offset: -2px; }
  `];
  private cat = (c: string) => html`<button class=${classMap({ cat: true, on: c === this.page })}>${c}</button>`;
  private check = (text: unknown, on: boolean, sub = false) => html`<label class=${classMap({ sub })}><input type="checkbox" .checked=${on}><span>${text}</span></label>`;
  render() {
    return html`
      <div class="title"><span>Outlook Options</span><button aria-label="Help">?</button><button aria-label="Close">${ic("close", 6)}</button></div>
      <div class="main">
        <nav class="cats">
          <div class="set ten">${["General", "Mail", "Calendar", "Groups", "People", "Tasks", "Search", "Language", "Ease of Access", "Advanced"].map(this.cat)}</div>
          <div class="set two">${["Customize Ribbon", "Quick Access Toolbar"].map(this.cat)}</div>
          <div class="set two">${["Add-ins", "Trust Center"].map(this.cat)}</div>
        </nav>
        <div class="view">
          <div class="content">
            <div class="intro">${ic("openMail", 16)}Change the settings for messages you create and receive.</div>
            <h2 class="bar">Compose messages</h2>
            <div class="row r1"><div class="pic">${ic("compose", 17)}</div>
              <div class="text"><div>Change the editing settings for messages.</div>
                <div><label for="format"><u>C</u>ompose messages in this format:</label><span class="pick"><select id="format"><option>HTML</option></select>${ic("triD", 5)}</span></div></div>
              <button class="btn"><u>E</u>ditor Options...</button></div>
            <div class="row r2"><div class="pic abc">abc${ic("abcCheck", 9)}</div>
              <div class="text">${this.check(html`<u>A</u>lways check spelling before sending`, false)}${this.check(html`<u>I</u>gnore original message text in reply or forward`, true)}</div>
              <button class="btn"><u>S</u>pelling and Autocorrect...</button></div>
            <div class="row r3"><div class="pic">${ic("signature", 17)}</div>
              <div class="text"><div>Create or modify signatures for messages.</div></div>
              <button class="btn hot">Sig<u>n</u>atures...</button></div>
            <div class="row r4"><div class="pic"><div class="glyphs"><i>B</i><span>A</span><b>C</b></div></div>
              <div class="text"><div>Use stationery to change default fonts and styles, colors, and backgrounds.</div></div>
              <button class="btn">Stationery and <u>F</u>onts...</button></div>
            <h2 class="bar">Outlook panes</h2>
            <div class="row r5"><div class="pic">${ic("panes", 16)}</div>
              <div class="text up"><div>Customize how items are marked as read when using the Reading Pane.</div></div>
              <button class="btn"><u>R</u>eading Pane...</button></div>
            <h2 class="bar">Message arrival</h2>
            <div class="row r6"><div class="pic">${ic("bell", 17)}</div>
              <div class="text"><div>When new messages arrive:</div>
                ${this.check(html`<u>P</u>lay a sound`, true)}${this.check(html`Briefly c<u>h</u>ange the mouse pointer`, false)}
                ${this.check(html`Sho<u>w</u> an envelope icon in the taskbar`, true)}${this.check(html`Display a Des<u>k</u>top Alert`, true)}
                ${this.check(html`Enable preview for <u>R</u>ights Protected messages (May impact performance)`, false, true)}</div></div>
            <h2 class="bar">Conversation Clean Up</h2>
            <div class="cut"><span class="a"></span><input type="text" aria-label="Clean up folder"><button aria-label="Browse"></button></div>
          </div>
          <div class="scroll"><button aria-label="Scroll up">${ic("triU", 4)}</button><div class="thumb"></div><button class="end" aria-label="Scroll down">${ic("triD", 4)}</button></div>
        </div>
      </div>
      <div class="foot"><button class="ok">OK</button><button>Cancel</button></div>`;
  }
}

/* ---------- taskbar ---------- */
const apps: [string, boolean?][] = [
  ["win"], ["cortana"], ["taskview"], ["explorer", true], ["outlook", true], ["ps"], ["bird", true], ["tv", true], ["anydesk"], ["teams", true],
  ["telegram", true], ["chrome", true], ["whatsapp", true], ["butterfly"], ["reel"], ["red"], ["film"], ["vnc"], ["vm"], ["putty"],
  ["excel", true], ["rdp", true], ["edge", true], ["cmd", true], ["ball", true], ["purple", true], ["firefox", true],
];

@customElement("ol-taskbar")
class OlTaskbar extends LitElement {
  static styles = [base, css`
    :host { display: flex; justify-content: space-between; background: linear-gradient(90deg, #243c45, #21383f 45%, #1b2e47 75%, #1a2745); color: #eef2f6; }
    .apps { display: grid; grid-auto-flow: column; grid-auto-columns: 1fr; width: 705px; }
    .app { display: grid; place-items: center; position: relative; }
    .app.on { background: #4b636c; }
    .app.run::after { content: ""; position: absolute; left: 3px; right: 2px; bottom: 0; height: 1px; background: #76b9ed; }
    .app.on::after { left: 0; right: 0; }
    .tray { display: flex; align-items: center; gap: 4px; padding-right: 9px; }
    .clock { text-align: center; line-height: 9px; padding: 0 4px; }
  `];
  render() {
    return html`
      <div class="apps">${apps.map(([n, run]) => html`<button class=${classMap({ app: true, run: !!run, on: n === "outlook" })} aria-label=${n}>${ic(n, ["win", "cortana", "taskview"].includes(n) ? 10 : 13)}</button>`)}</div>
      <div class="tray">${ic("up", 7)}${ic("battery", 9)}${ic("network", 9)}${ic("sound", 9)}<span>ENG</span>
        <div class="clock">9:41 AM<br>7/10/2020</div>${ic("notes", 14)}</div>`;
  }
}

/* ---------- shell ---------- */
@customElement("app-root")
class AppRoot extends LitElement {
  static styles = [base, css`
    :host { display: grid; grid-template-rows: 18px auto 1fr 12px 21px; height: 100vh; position: relative; overflow: hidden; font: 6px "Open Sans", "Noto Sans", sans-serif; color: #444; }
    .title { display: flex; align-items: center; padding: 0 9px 0 10px; color: #e3effa;
      background: radial-gradient(circle at 785px 12px, #1766ae 16px, transparent 18px), radial-gradient(circle at 905px -4px, #145fa4 32px, transparent 34px), radial-gradient(circle at 1000px -14px, #145fa4 30px, transparent 32px), linear-gradient(90deg, #106ebe 74%, #1268b4 78%); }
    .quick { display: flex; align-items: center; gap: 7px; width: 136px; }
    .find { display: flex; align-items: center; gap: 7px; width: 162px; height: 13px; padding-left: 11px; background: #deecf9; color: #1b5f9e; }
    .find input { flex: 1; min-width: 0; font-size: 6px; }
    .find input::placeholder { color: #1b5f9e; opacity: 1; }
    .wins { display: flex; align-items: center; gap: 18px; margin-left: auto; }
    .work { display: grid; grid-template-columns: 146px 163px 1fr; min-height: 0; }
    .status { display: flex; align-items: center; background: #f3f2f1; border-top: 1px solid #dddbd9; padding: 0 4px; color: #555; white-space: nowrap; }
    .status .left { flex: 1; }
    .status .conn { margin: 0 10px; }
    .views { display: flex; }
    .views button { display: grid; place-items: center; width: 21px; height: 11px; }
    .views .on { background: #cfcdcb; }
    .zoom { display: flex; align-items: center; gap: 3px; margin: 0 5px 0 3px; font-size: 8px; }
    .zoom input { appearance: none; width: 54px; height: 7px; background: linear-gradient(#b5b3b1, #b5b3b1) center / 100% 1px no-repeat; }
    .zoom input::-webkit-slider-thumb { appearance: none; width: 3px; height: 7px; background: #666; }
    ol-options { position: absolute; left: 151px; top: 88px; width: 449px; height: 366px; }
  `];
  render() {
    return html`
      <header class="title">
        <div class="quick">${ic("sync", 11)}${ic("undo", 10)}${ic("qat", 8)}</div>
        <label class="find">${ic("search", 9)}<input type="text" placeholder="Search" aria-label="Search"></label>
        <div class="wins">${ic("ribbonOpt", 8)}${ic("min", 6)}${ic("restore", 6)}${ic("close", 6)}</div>
      </header>
      <ol-ribbon></ol-ribbon>
      <main class="work"><ol-folders></ol-folders><ol-messages></ol-messages><ol-reading></ol-reading></main>
      <footer class="status">
        <span class="left">Items: 847</span><span>This folder is up to date.</span><span class="conn">Connected to: Microsoft Exchange</span>
        <div class="views"><button class="on" aria-label="Normal view">${ic("viewA", 8)}</button><button aria-label="Reading view">${ic("viewB", 8)}</button></div>
        <div class="zoom"><span>−</span><input type="range" value="50" aria-label="Zoom"><span>+</span></div><span>100%</span>
      </footer>
      <ol-taskbar></ol-taskbar>
      <ol-options page="Mail"></ol-options>`;
  }
}
